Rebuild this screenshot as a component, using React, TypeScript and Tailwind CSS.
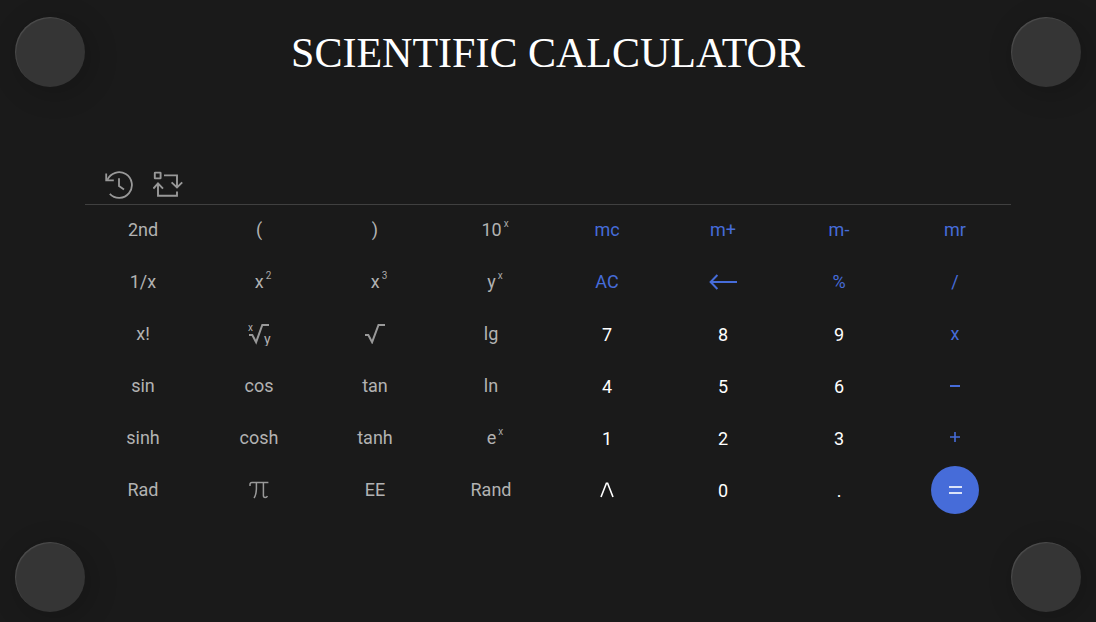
import type { ReactNode } from 'react';

type Tone = 'function' | 'digit' | 'action';

interface Key {
  label: string;
  tone: Tone;
  content?: ReactNode;
  raised?: boolean;
}

const toneClass: Record<Tone, string> = {
  function: 'text-[#b2b2b2] pb-[2px]',
  digit: 'text-white',
  action: 'text-[#466cd9] pb-[2px]',
};

function Power({ base, exponent }: { base: string; exponent: string }) {
  return (
    <span className="flex items-start gap-[2px]">
      <span>{base}</span>
      <span className="text-[10px] leading-[11px] text-[#a8a8a8]">{exponent}</span>
    </span>
  );
}

function RootIcon() {
  return (
    <svg width="20" height="20" viewBox="0 0 20 20" fill="none" stroke="#999" strokeWidth="2" aria-hidden="true">
      <path d="M0 11H3.3L7.1 18.2L13.5 1H20" />
    </svg>
  );
}

function NthRootIcon() {
  return (
    <svg width="24" height="24" viewBox="0 0 24 24" fill="none" aria-hidden="true">
      <path d="M2 13H5.3L9.1 20.2L15.3 3H22" stroke="#999" strokeWidth="2" />
      <text x="1" y="9" fontSize="10" fill="#b2b2b2">x</text>
      <text x="17" y="22" fontSize="14" fill="#b2b2b2">y</text>
    </svg>
  );
}

function PiIcon() {
  return (
    <svg width="20" height="18" viewBox="0 0 20 18" fill="none" stroke="#999" strokeWidth="1.5" aria-hidden="true">
      <path d="M1 5V3.4Q1 1.6 3 1.6H19.4" />
      <path d="M7.4 1.6V8Q7.2 14 5 17" />
      <path d="M14.4 1.6V14.4Q14.4 16.4 16.2 16.4Q17.8 16.4 18.4 15" />
    </svg>
  );
}

function BackArrowIcon() {
  return (
    <svg width="28" height="16" viewBox="0 0 28 16" fill="none" stroke="currentColor" strokeWidth="2" aria-hidden="true">
      <path d="M28 8H1.6M8.4 1L1.6 8L8.4 15" />
    </svg>
  );
}

function CaretIcon() {
  return (
    <svg width="14" height="18" viewBox="0 0 14 18" fill="none" stroke="currentColor" strokeWidth="1.6" aria-hidden="true">
      <path d="M1 15L6.4 1.2H7.6L13 15" />
    </svg>
  );
}

function MinusIcon() {
  return (
    <svg width="10" height="10" viewBox="0 0 10 10" fill="none" stroke="currentColor" strokeWidth="2" aria-hidden="true">
      <path d="M0 5H10" />
    </svg>
  );
}

function PlusIcon() {
  return (
    <svg width="10" height="12" viewBox="0 0 10 12" fill="none" stroke="currentColor" strokeWidth="1.6" aria-hidden="true">
      <path d="M0 5H10M5 0V10" />
    </svg>
  );
}

function EqualsIcon() {
  return (
    <svg width="14" height="10" viewBox="0 0 14 10" fill="none" stroke="#dbe3f8" strokeWidth="2" aria-hidden="true">
      <path d="M1 2H14M1 8H14" />
    </svg>
  );
}

function HistoryIcon() {
  return (
    <svg width="28" height="28" viewBox="0 0 28 28" fill="none" stroke="#999" strokeWidth="1.8" aria-hidden="true">
      <path d="M2.4 8.8A12.8 12.8 0 1 1 4.8 22.8" />
      <path d="M1.2 2.6V9.4H8.8" />
      <path d="M14 7.2V15L19 18.6" />
    </svg>
  );
}

function SwitchIcon() {
  return (
    <svg width="30" height="28" viewBox="0 0 30 28" fill="none" stroke="#999" strokeWidth="1.9" aria-hidden="true">
      <rect x="1.8" y="1.6" width="5.8" height="5.8" rx="0.4" />
      <path d="M11 4.4H24V16M18.6 11.4L24 16.4L29.2 11.4" />
      <path d="M24 20.4V24.8H5V12.6M0.4 17.6L5 12.4L10 17.6" />
    </svg>
  );
}

const fn = (label: string, content?: ReactNode): Key => ({ label, tone: 'function', content });
const digit = (label: string, content?: ReactNode): Key => ({ label, tone: 'digit', content });
const act = (label: string, content?: ReactNode): Key => ({ label, tone: 'action', content });

const power = (label: string, base: string, exponent: string) =>
  fn(label, <span className="pl-2"><Power base={base} exponent={exponent} /></span>);

const keys: Key[] = [
  fn('2nd'), fn('('), fn(')'), power('10 to the x', '10', 'x'),
  act('mc'), act('m+'), act('m-'), act('mr'),
  fn('1/x'), power('x squared', 'x', '2'), power('x cubed', 'x', '3'), power('y to the x', 'y', 'x'),
  act('AC'), act('Backspace', <BackArrowIcon />), act('%'), act('/'),
  fn('x!'), fn('xth root of y', <NthRootIcon />), fn('Square root', <RootIcon />), fn('lg'),
  digit('7'), digit('8'), digit('9'), act('x'),
  fn('sin'), fn('cos'), fn('tan'), fn('ln'),
  digit('4'), digit('5'), digit('6'), act('Minus', <MinusIcon />),
  fn('sinh'), fn('cosh'), fn('tanh'), power('e to the x', 'e', 'x'),
  digit('1'), digit('2'), digit('3'), act('Plus', <PlusIcon />),
  fn('Rad'), fn('Pi', <PiIcon />), fn('EE'), fn('Rand'),
  digit('Power', <CaretIcon />), digit('0'), digit('.'),
  { label: 'Equals', tone: 'action', content: <EqualsIcon />, raised: true },
];

function CalculatorKey({ item }: { item: Key }) {
  return (
    <button
      type="button"
      aria-label={item.content ? item.label : undefined}
      className={`flex h-[52px] items-center justify-center text-[18px] leading-6 ${toneClass[item.tone]}`}
    >
      {item.raised ? (
        <span className="flex size-12 items-center justify-center rounded-full bg-[#466cd9]">{item.content}</span>
      ) : (
        item.content ?? item.label
      )}
    </button>
  );
}

function Knob() {
  return (
    <div className="size-[70px] rounded-full bg-[#353535] shadow-[5px_5px_30px_rgba(0,0,0,0.2),inset_1px_1px_1px_rgba(255,255,255,0.12)]" />
  );
}

function KnobColumn() {
  return (
    <div className="flex flex-col justify-between">
      <Knob />
      <Knob />
    </div>
  );
}

export default function App() {
  return (
    <div className="grid min-h-screen grid-cols-[70px_minmax(0,1fr)_70px] bg-[#1a1a1a] px-[15px] pt-[17px] pb-[10px] font-['Roboto',sans-serif]">
      <KnobColumn />
      <main>
        <h1 className="text-center font-['Liberation_Serif',serif] text-[42px] leading-[72px] text-white">
          SCIENTIFIC CALCULATOR
        </h1>
        <section aria-label="Calculator" className="pt-[80px]">
          <div className="flex items-center gap-5 border-b border-[#404040] px-5 pt-[2px] pb-[5px]">
            <button type="button" aria-label="History"><HistoryIcon /></button>
            <button type="button" aria-label="Switch layout"><SwitchIcon /></button>
          </div>
          <div className="-mr-[2px] grid grid-cols-8">
            {keys.map((item) => (
              <CalculatorKey key={item.label + item.tone} item={item} />
            ))}
          </div>
        </section>
      </main>
      <KnobColumn />
    </div>
  );
}
